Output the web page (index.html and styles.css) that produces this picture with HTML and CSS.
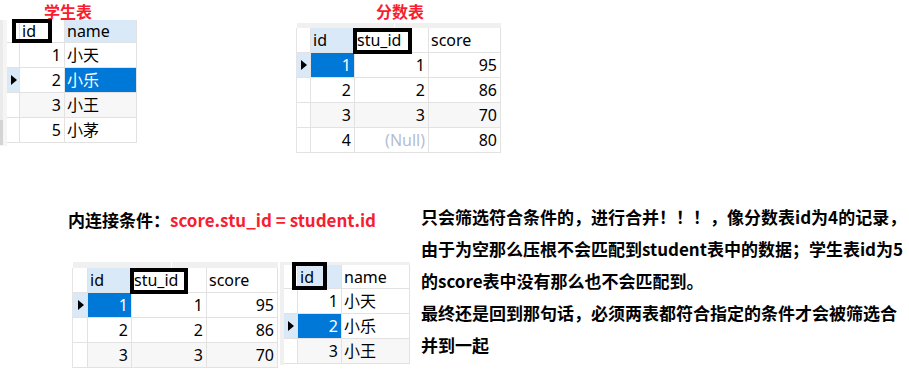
FILE: index.html
```html
<!DOCTYPE html>
<html lang="zh-CN">
<head>
<meta charset="utf-8">
<title>内连接</title>
<link rel="stylesheet" href="styles.css">
</head>
<body>
<div class="page">
  <section class="top">
    <div class="block block-student">
      <h2 class="caption caption-student">学生表</h2>
      <div class="table-wrap">
        <div class="edge edge-student"></div>
        <div class="grid grid-student">
          <div class="cell head ind"></div><div class="cell head">id</div><div class="cell head sel-col">name</div>
          <div class="cell ind"></div><div class="cell num">1</div><div class="cell">小天</div>
          <div class="cell ind sel-row"><span class="arrow"></span></div><div class="cell num">2</div><div class="cell sel">小乐</div>
          <div class="cell ind"></div><div class="cell num alt">3</div><div class="cell alt">小王</div>
          <div class="cell ind"></div><div class="cell num">5</div><div class="cell">小茅</div>
        </div>
        <div class="mark mark-student"></div>
      </div>
    </div>
    <div class="block block-score">
      <h2 class="caption caption-score">分数表</h2>
      <div class="table-wrap col">
        <div class="strip strip-score"></div>
        <div class="grid grid-score">
          <div class="cell head ind"></div><div class="cell head sel-col">id</div><div class="cell head">stu_id</div><div class="cell head">score</div>
          <div class="cell ind sel-row"><span class="arrow"></span></div><div class="cell num sel">1</div><div class="cell num">1</div><div class="cell num">95</div>
          <div class="cell ind"></div><div class="cell num">2</div><div class="cell num">2</div><div class="cell num">86</div>
          <div class="cell ind"></div><div class="cell num alt">3</div><div class="cell num alt">3</div><div class="cell num alt">70</div>
          <div class="cell ind"></div><div class="cell num">4</div><div class="cell num null">(Null)</div><div class="cell num">80</div>
        </div>
        <div class="mark mark-score"></div>
      </div>
    </div>
  </section>
  <section class="bottom">
    <div class="join">
      <p class="cond">内连接条件：<span class="red">score.stu_id = student.id</span></p>
      <div class="join-tables">
        <div class="table-wrap col">
          <div class="strip strip-left"></div>
          <div class="grid grid-left">
            <div class="cell head ind"></div><div class="cell head sel-col">id</div><div class="cell head">stu_id</div><div class="cell head">score</div>
            <div class="cell ind sel-row"><span class="arrow"></span></div><div class="cell num sel">1</div><div class="cell num">1</div><div class="cell num">95</div>
            <div class="cell ind"></div><div class="cell num">2</div><div class="cell num">2</div><div class="cell num">86</div>
            <div class="cell ind"></div><div class="cell num alt">3</div><div class="cell num alt">3</div><div class="cell num alt">70</div>
          </div>
          <div class="mark mark-left"></div>
        </div>
        <div class="table-wrap">
          <div class="edge edge-right"></div>
          <div class="col">
            <div class="strip strip-right"></div>
            <div class="grid grid-right">
              <div class="cell head ind"></div><div class="cell head sel-col">id</div><div class="cell head">name</div>
              <div class="cell ind"></div><div class="cell num">1</div><div class="cell">小天</div>
              <div class="cell ind sel-row"><span class="arrow"></span></div><div class="cell num sel">2</div><div class="cell">小乐</div>
              <div class="cell ind"></div><div class="cell num alt">3</div><div class="cell alt">小王</div>
            </div>
          </div>
          <div class="mark mark-right"></div>
        </div>
      </div>
    </div>
    <div class="note">
      <p>只会筛选符合条件的，进行合并！！！，像分数表id为4的记录，<br>由于为空那么压根不会匹配到student表中的数据；学生表id为5<br>的score表中没有那么也不会匹配到。</p>
      <p>最终还是回到那句话，必须两表都符合指定的条件才会被筛选合<br>并到一起</p>
    </div>
  </section>
</div>
</body>
</html>
```

FILE: styles.css
```css
* {
  box-sizing: border-box;
  margin: 0;
  padding: 0;
}

html,
body {
  background: #ffffff;
}

body {
  width: 909px;
  height: 371px;
  overflow: hidden;
  font-family: "Noto Sans", "Noto Sans CJK SC", sans-serif;
  color: #000000;
}

.top {
  display: flex;
  height: 201px;
}

.block-student {
  width: 297px;
}

.caption {
  font-family: "Noto Sans CJK SC", sans-serif;
  font-weight: 700;
  font-size: 16px;
  line-height: 23px;
  color: #f81d30;
}

.caption-student {
  height: 20px;
  padding-left: 44px;
}

.caption-score {
  height: 23px;
  padding-left: 79px;
}

.table-wrap {
  position: relative;
  display: flex;
  align-items: flex-start;
}

.col {
  display: flex;
  flex-direction: column;
}

.edge-student {
  width: 7px;
  height: 126px;
  background:
    linear-gradient(#d4d4d4, #d4d4d4) 0 100px / 3px 25px no-repeat,
    linear-gradient(#ebebeb, #ebebeb) 0 0 / 3px 100px no-repeat,
    #f5f5f5;
}

.edge-right {
  width: 4px;
  height: 103px;
  background: #f0f0f0;
}

.strip {
  background: #f0f0f0;
}

.strip-score {
  width: 204px;
  height: 5px;
  background: linear-gradient(to right, #f0f0f0 97px, #ffffff 97px, #ffffff 98px, #f0f0f0 98px);
}

.strip-left {
  width: 205px;
  height: 6px;
  background: linear-gradient(to right, #f0f0f0 98px, #ffffff 98px, #ffffff 99px, #f0f0f0 99px);
}

.strip-right {
  width: 126px;
  height: 3px;
}

.grid {
  display: grid;
  font-size: 16px;
}

.grid-student {
  grid-template-columns: 13px 45px 72px;
  grid-template-rows: 23px repeat(4, 25px);
}

.grid-score {
  grid-template-columns: 14px 44px 74px 72px;
  grid-template-rows: repeat(5, 25px);
  border-left: 1px solid #e4e4e4;
  margin-left: -1px;
}

.grid-left {
  grid-template-columns: 15px 44px 75px 71px;
  grid-template-rows: repeat(4, 25px);
  border-left: 1px solid #e4e4e4;
  margin-left: -1px;
}

.grid-right {
  grid-template-columns: 14px 44px 68px;
  grid-template-rows: 24px repeat(3, 25px);
}

.cell {
  display: flex;
  align-items: center;
  padding: 0 2px;
  border-right: 1px solid #e2e2e2;
  border-bottom: 1px solid #e2e2e2;
  white-space: nowrap;
  overflow: hidden;
  line-height: 22px;
}

.num {
  justify-content: flex-end;
  padding-right: 3px;
}

.ind {
  padding: 0;
  justify-content: center;
}

.head {
  background: #ffffff;
}

.sel-col {
  background: #d9e9f8;
}

.sel-row {
  background: #d9e9f8;
}

.sel {
  background: #0078d7;
  color: #ffffff;
}

.alt {
  background: #f7f7f7;
}

.null {
  color: #b3bdd3;
}

.arrow {
  width: 0;
  height: 0;
  border-left: 6px solid #000000;
  border-top: 5.5px solid transparent;
  border-bottom: 5.5px solid transparent;
  margin-left: 1px;
}

.mark {
  position: absolute;
  border: 4px solid #000000;
}

.mark-student {
  left: 12px;
  top: -1px;
  width: 40px;
  height: 24px;
}

.mark-score {
  left: 56px;
  top: 5px;
  width: 59px;
  height: 26px;
}

.mark-left {
  left: 57px;
  top: 6px;
  width: 58px;
  height: 26px;
}

.mark-right {
  left: 12px;
  top: 0;
  width: 35px;
  height: 28px;
}

.bottom {
  display: flex;
}

.join {
  width: 420px;
  flex: none;
}

.cond,
.note {
  font-family: "Noto Sans CJK SC", sans-serif;
  font-weight: 700;
  font-size: 17px;
  line-height: 32px;
  white-space: nowrap;
}

.cond {
  margin-top: 3px;
  padding-left: 68px;
}

.red {
  color: #f81d30;
}

.join-tables {
  display: flex;
  gap: 2px;
  margin-top: 26px;
  padding-left: 73px;
}

.note {
  padding-left: 1px;
}
```
